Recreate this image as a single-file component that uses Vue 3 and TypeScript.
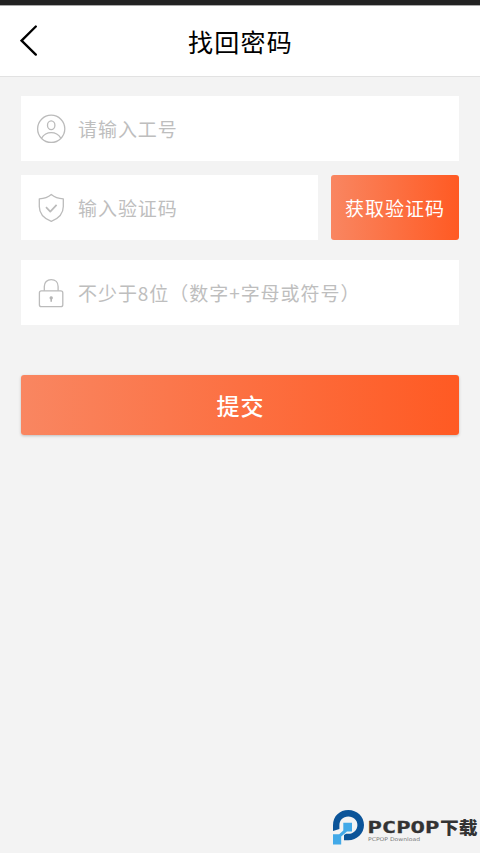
<script setup lang="ts">
import { ref } from 'vue'

const account = ref('')
const code = ref('')
const password = ref('')
</script>

<template>
  <div class="page">
    <div class="status"></div>
    <header class="header">
      <button class="back" type="button" aria-label="返回">
        <svg width="18" height="32" viewBox="0 0 18 32">
          <path d="M15.8 1.5L1.6 15.6L15.8 29.6" />
        </svg>
      </button>
      <h1 class="title">找回密码</h1>
    </header>

    <form class="form" @submit.prevent>
      <label class="field">
        <svg class="icon" viewBox="0 0 30 30">
          <circle cx="15.2" cy="14.8" r="13.6" />
          <ellipse cx="15.2" cy="11.3" rx="3.7" ry="4.4" />
          <path d="M5.6 24.1C7.8 20.6 11.2 18.7 15.2 18.7S22.6 20.6 24.8 24.1" />
        </svg>
        <input v-model="account" type="text" placeholder="请输入工号" />
      </label>

      <div class="row">
        <label class="field grow">
          <svg class="icon" viewBox="0 0 30 30">
            <path d="M15.3 1.5C18.7 4.4 22.7 5.6 27.3 5.8V13.4C27.3 20.7 22.3 25.5 15.3 28.3C8.2 25.5 3.3 20.7 3.3 13.4V5.8C8 5.6 12 4.4 15.3 1.5Z" />
            <path class="thick" d="M10 14.2L14.3 18.6L20.6 11.9" />
          </svg>
          <input v-model="code" type="text" placeholder="输入验证码" />
        </label>
        <button class="btn code" type="button">获取验证码</button>
      </div>

      <label class="field last">
        <svg class="icon" viewBox="0 0 30 30">
          <rect x="3.4" y="12.8" width="23.4" height="15.9" rx="2" />
          <path d="M8.3 12.8V8.4C8.3 4.5 11 1.6 15.2 1.6S22.1 4.5 22.1 8.4V12.8" />
          <path class="solid" d="M15.2 18.3a1.7 1.7 0 0 1 .8 3.2v2.3h-1.6v-2.3a1.7 1.7 0 0 1 .8-3.2Z" />
        </svg>
        <input v-model="password" type="password" placeholder="不少于8位（数字+字母或符号）" />
      </label>

      <button class="btn submit" type="submit">提交</button>
    </form>

    <div class="brand">
      <svg width="148" height="42" viewBox="0 0 148 42">
        <path class="navy" d="M1 24V18.3C1 9 7.8 3 16.3 3C25 3 32 9.6 32 18S25 33.2 16.3 33.2H12V28L14 26.8H16.3C21.6 26.8 25.4 23.1 25.4 18S21.6 9.4 16.3 9.4S7.4 13 7.4 18.3V22Z" />
        <path class="sky" d="M11.3 15.8H20V24.6H15L9.2 29.6V37.4H1V27.3H7.2L11.3 23.5Z" />
        <text class="latin" x="35.4" y="26.2" textLength="72" lengthAdjust="spacingAndGlyphs">PCPOP</text>
        <text class="cjk" x="108" y="27" textLength="37.5" lengthAdjust="spacingAndGlyphs">下载</text>
        <text class="small" x="36" y="33.7" textLength="52" lengthAdjust="spacingAndGlyphs">PCPOP Download</text>
      </svg>
    </div>
  </div>
</template>

<style>
body {
  margin: 0;
  background: #f3f3f3;
}
</style>

<style scoped>
.page {
  display: flex;
  flex-direction: column;
  box-sizing: border-box;
  height: 853px;
  background: #f3f3f3;
  font-family: "Noto Sans CJK SC", sans-serif;
}
.status {
  height: 5px;
  background: #222;
}
.header {
  display: grid;
  grid-template-columns: 60px 1fr 60px;
  align-items: center;
  box-sizing: border-box;
  height: 72px;
  background: #fff;
  border-top: 1px solid #aaa;
  border-bottom: 1px solid #e2e2e2;
}
.back {
  display: flex;
  padding: 0 0 0 20px;
  border: 0;
  background: none;
}
.back path {
  fill: none;
  stroke: #000;
  stroke-width: 2.3;
  stroke-linecap: round;
}
.title {
  margin: 0;
  padding: 0 0 1px 1px;
  color: #000;
  font-size: 25px;
  font-weight: 400;
  line-height: 36px;
  letter-spacing: 1.2px;
  text-align: center;
}
.form {
  display: flex;
  flex-direction: column;
  padding: 19px 21px 0;
}
.field {
  display: flex;
  align-items: center;
  gap: 12px;
  box-sizing: border-box;
  height: 65px;
  padding: 0 15px;
  background: #fff;
}
.icon {
  flex: none;
  width: 30px;
  height: 30px;
  fill: none;
  stroke: #bbb;
  stroke-width: 1.3;
  stroke-linejoin: round;
}
.thick {
  stroke-width: 1.7;
}
.solid {
  fill: #b5b5b5;
  stroke: none;
}
input {
  flex: 1;
  min-width: 0;
  height: 32px;
  padding: 0;
  border: 0;
  outline: 0;
  background: none;
  color: #333;
  font: 400 19px "Noto Sans CJK SC", sans-serif;
  letter-spacing: 0.95px;
}
input::placeholder {
  color: #bebebe;
  opacity: 1;
}
.row {
  display: flex;
  gap: 13px;
  margin-top: 14px;
}
.grow {
  flex: 1;
  min-width: 0;
}
.last {
  margin-top: 20px;
}
.btn {
  padding: 0;
  border: 0;
  border-radius: 3px;
  background: linear-gradient(90deg, #f98661, #ff5a23);
  color: #fff;
  font-family: inherit;
}
.code {
  width: 128px;
  height: 65px;
  font-size: 19px;
  letter-spacing: 1px;
}
.submit {
  height: 60px;
  margin-top: 50px;
  padding-left: 1px;
  font-size: 23px;
  font-weight: 500;
  letter-spacing: 1px;
  box-shadow: 0 1px 3px rgba(0, 0, 0, 0.22);
}
.brand {
  display: flex;
  justify-content: flex-end;
  margin-top: auto;
  padding-bottom: 4px;
}
.navy {
  fill: #0b5499;
}
.sky {
  fill: #42a9e8;
}
.latin {
  fill: #333;
  font: 700 16px "DejaVu Sans Mono", monospace;
  stroke: #333;
  stroke-width: 0.3;
}
.cjk {
  fill: #333;
  font: 900 17px "Noto Sans CJK SC", sans-serif;
}
.small {
  fill: #777;
  font: 5.2px "DejaVu Sans", sans-serif;
}
</style>
